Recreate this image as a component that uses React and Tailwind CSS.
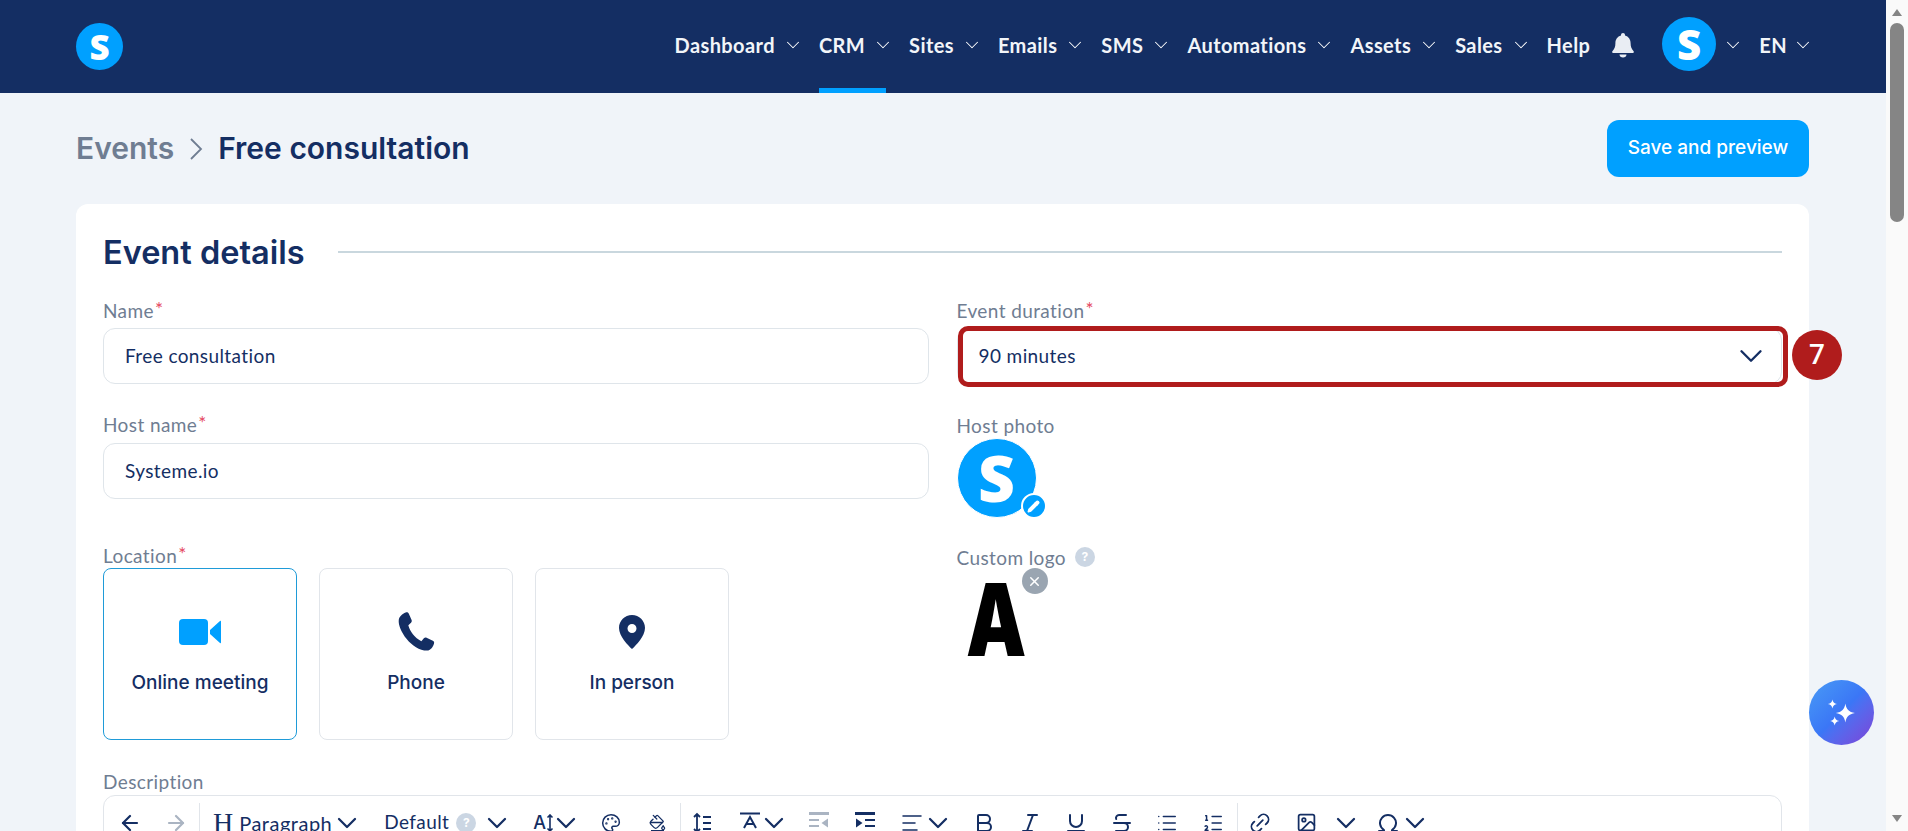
import {
  ArrowLeft,
  ArrowRight,
  Bold,
  ChevronDown,
  Image,
  Italic,
  Link2,
  List,
  ListOrdered,
  AlignLeft,
  Omega,
  Palette,
  PaintBucket,
  Pencil,
  Strikethrough,
  Underline,
  X,
} from "lucide-react";

const navItems = [
  { label: "Dashboard", caret: true },
  { label: "CRM", caret: true, active: true },
  { label: "Sites", caret: true },
  { label: "Emails", caret: true },
  { label: "SMS", caret: true },
  { label: "Automations", caret: true },
  { label: "Assets", caret: true },
  { label: "Sales", caret: true },
  { label: "Help" },
];

function Caret() {
  return <ChevronDown size={22} strokeWidth={1.1} className="text-white" />;
}

function Logo({ className, textClass }) {
  return (
    <div className={`flex shrink-0 items-center justify-center rounded-full bg-[#00a0ff] font-['Open_Sans',sans-serif] font-extrabold text-white ${className}`}>
      <span className={textClass}>S</span>
    </div>
  );
}

function NavBar() {
  return (
    <header className="flex h-[93px] items-center justify-between bg-[#142e63] pl-[76px] pr-[72px]">
      <Logo className="h-[47px] w-[47px]" textClass="text-[35px] leading-none" />
      <nav className="flex h-full items-center font-['Lato',sans-serif] text-[20px] font-bold tracking-[0.4px] text-[#f2f5f9]">
        {navItems.map((item) => (
          <div key={item.label} className={`relative flex h-full items-center gap-[7px] pb-[4px] ${item.caret ? "mr-[15px]" : ""}`}>
            <span>{item.label}</span>
            {item.caret && <Caret />}
            {item.active && <div className="absolute bottom-0 left-0 h-[5px] w-[67px] bg-[#00a0ff]" />}
          </div>
        ))}
        <svg width="24" height="26" viewBox="0 0 24 26" className="-mt-[4px] ml-[21px] mr-[27px]" fill="#e9edf3">
          <path d="M12 1c1.2 0 2 .9 2 2v.5c3.6 1 5.6 4 5.6 7.7 0 3.800 1 5.800 3 8 .6.7.2 1.800-.8 1.800H2.200c-1 0-1.400-1.100-.8-1.800 2-2.200 3-4.200 3-8 0-3.700 2-6.700 5.600-7.700V3c0-1.100.8-2 2-2z" />
          <path d="M8.500 22.500h7c0 1.800-1.500 3-3.500 3s-3.500-1.200-3.500-3z" />
        </svg>
        <Logo className="-mt-[5px] h-[54px] w-[54px]" textClass="text-[42px] leading-none" />
        <div className="-mt-[4px] ml-[6px] mr-[15px]"><Caret /></div>
        <div className="-mt-[4px] flex items-center gap-[5px]">
          <span>EN</span>
          <Caret />
        </div>
      </nav>
    </header>
  );
}

function Label({ children, required, hint }) {
  return (
    <div className="flex h-[22px] items-center font-['Lato',sans-serif] text-[19px] leading-none tracking-[0.4px] text-[#6f7d92]">
      {children}
      {required && <span className="ml-[1px] -mt-[4px] text-[#e5465e]">*</span>}
      {hint && <HelpDot className="ml-[9px]" />}
    </div>
  );
}

function HelpDot({ className }) {
  return (
    <span className={`flex h-[20px] w-[20px] items-center justify-center rounded-full bg-[#cbd6e3] font-['Inter',sans-serif] text-[12px] font-bold text-white ${className}`}>?</span>
  );
}

function TextInput({ value, children }) {
  return (
    <div className="flex h-[56px] items-center justify-between rounded-[12px] border border-[#dfe5ea] bg-white pl-[21px] pr-[11px] font-['Lato',sans-serif] text-[19px] tracking-[0.4px] text-[#142e63]">
      <span>{value}</span>
      {children}
    </div>
  );
}

function LocationCard({ label, active, children }) {
  return (
    <div className={`flex h-[172px] w-[194px] flex-col items-center rounded-[8px] border bg-white pt-[43px] ${active ? "border-[#1f9bd8]" : "border-[#e1e5ea]"}`}>
      <div className="flex h-[40px] items-center justify-center">{children}</div>
      <div className="mt-[19px] font-['Inter',sans-serif] text-[19px] font-medium leading-[24px] text-[#142e63]">{label}</div>
    </div>
  );
}

function Tool({ children, w = 46, muted }) {
  return (
    <div
      className={`flex shrink-0 items-center justify-center ${muted ? "text-[#aab4c2]" : "text-[#142e63]"}`}
      style={{ width: w }}
    >
      {children}
    </div>
  );
}

function Sep({ className = "" }) {
  return <div className={`h-[40px] w-px shrink-0 bg-[#e1e5ea] ${className}`} />;
}

function Chev({ className = "" }) {
  return <ChevronDown size={32} strokeWidth={1.7} className={`shrink-0 ${className}`} />;
}

function IndentIcon({ flip }) {
  return (
    <svg width="22" height="24" viewBox="0 0 22 24" fill="currentColor" className={flip ? "-scale-x-100" : ""}>
      <rect x="1" y="1" width="20" height="3" />
      <rect x="1" y="20" width="20" height="3" />
      <rect x="11" y="8" width="10" height="2" />
      <rect x="11" y="14" width="10" height="2" />
      <path d="M2 7.500 8.500 12 2 16.500z" />
    </svg>
  );
}

function Toolbar() {
  return (
    <div className="mt-[3px] rounded-t-[12px] border border-[#e1e5ea] bg-white">
      <div className="flex h-[50px] items-center pl-[3px] pt-[3px] font-['Lato',sans-serif] text-[#142e63]">
        <Tool><ArrowLeft size={24} strokeWidth={2.2} /></Tool>
        <Tool muted><ArrowRight size={24} strokeWidth={2.2} /></Tool>
        <Sep />
        <span className="ml-[13px] font-['Liberation_Serif',serif] text-[28px] leading-none">H</span>
        <span className="ml-[6px] text-[20px] tracking-[0.5px]">Paragraph</span>
        <Chev className="-ml-[1px]" />
        <span className="ml-[21px] w-[63px] shrink-0 text-[19px] tracking-[0.4px]">Default</span>
        <HelpDot className="ml-[9px] shrink-0" />
        <Chev className="ml-[5px]" />
        <div className="ml-[20px] flex shrink-0 items-center font-['Inter',sans-serif] text-[18px] font-medium">
          <span>A</span>
          <svg width="8" height="18" viewBox="0 0 8 18" fill="none" stroke="currentColor" strokeWidth="1.600">
            <path d="M4 1v16M1.500 3.500 4 1l2.500 2.500M1.500 14.500 4 17l2.500-2.500" />
          </svg>
        </div>
        <Chev className="-ml-[4px]" />
        <Tool w={58}><Palette size={20} strokeWidth={1.8} /></Tool>
        <Tool w={34}>
          <div className="flex flex-col items-center">
            <PaintBucket size={17} strokeWidth={1.8} />
            <div className="-mt-[1px] h-[2px] w-[13px] bg-[#142e63]" />
          </div>
        </Tool>
        <Sep className="ml-[6px]" />
        <Tool w={42}>
          <svg width="20" height="22" viewBox="0 0 20 22" fill="none" stroke="currentColor" strokeWidth="1.800">
            <path d="M5 2v18M2 5l3-3 3 3M2 17l3 3 3-3M11 5h8M11 11h8M11 17h8" />
          </svg>
        </Tool>
        <svg width="24" height="24" viewBox="0 0 24 24" fill="none" stroke="currentColor" strokeWidth="2" className="ml-[15px] shrink-0">
          <path d="M2 2.500h20M6 17 12 6l6 11M8.200 13h7.600M2 22h20" />
        </svg>
        <Chev className="-ml-[4px]" />
        <Tool w={58} muted><IndentIcon flip /></Tool>
        <Tool w={34}><IndentIcon /></Tool>
        <AlignLeft size={24} strokeWidth={1.5} className="ml-[18px] shrink-0" />
        <Chev className="-ml-[2px]" />
        <Tool w={60}><Bold size={24} strokeWidth={2} /></Tool>
        <Tool w={32}><Italic size={24} strokeWidth={2} /></Tool>
        <Tool w={60}><Underline size={24} strokeWidth={2} /></Tool>
        <Tool w={32}><Strikethrough size={24} strokeWidth={2} /></Tool>
        <Tool w={58}><List size={22} strokeWidth={1.6} /></Tool>
        <Tool w={34}><ListOrdered size={22} strokeWidth={1.6} /></Tool>
        <Sep className="ml-[7px]" />
        <Tool w={44}><Link2 size={24} strokeWidth={1.8} className="-rotate-45" /></Tool>
        <Tool w={48}><Image size={21} strokeWidth={2} /></Tool>
        <Tool w={32}><Chev /></Tool>
        <Omega size={24} strokeWidth={2} className="ml-[14px] shrink-0" />
        <Chev className="-ml-[1px]" />
      </div>
    </div>
  );
}

function Sparkles() {
  return (
    <svg width="36" height="36" viewBox="0 0 32 32" fill="#fff">
      <path d="M19 7.500c.8 5 3 7.500 8.500 8.500-5.500 1-7.700 3.500-8.500 8.500-.8-5-3-7.500-8.500-8.500 5.500-1 7.700-3.500 8.500-8.500z" />
      <path d="M7.500 4c.4 2.400 1.500 3.600 4 4-2.500.4-3.600 1.600-4 4-.4-2.400-1.500-3.600-4-4 2.500-.4 3.600-1.600 4-4z" />
      <path d="M9.500 19c.4 2.400 1.500 3.600 4 4-2.500.4-3.600 1.600-4 4-.4-2.400-1.500-3.600-4-4 2.500-.4 3.600-1.600 4-4z" />
    </svg>
  );
}

function Scrollbar() {
  return (
    <div className="flex h-full w-[22px] shrink-0 flex-col items-center bg-[#fafafa]">
      <div className="mt-[9px] h-0 w-0 border-x-[5px] border-b-[7px] border-x-transparent border-b-[#858585]" />
      <div className="mt-[7px] h-[199px] w-[14px] rounded-full bg-[#858585]" />
      <div className="mt-auto mb-[9px] h-0 w-0 border-x-[5px] border-t-[7px] border-x-transparent border-t-[#858585]" />
    </div>
  );
}

export default function App() {
  return (
    <div className="flex h-screen overflow-hidden bg-[#f0f4f9]">
      <div className="relative min-w-0 flex-1 overflow-hidden">
        <NavBar />
        <main className="pl-[76px] pr-[77px]">
          <div className="flex h-[111px] items-center justify-between">
            <div className="flex items-center font-['Inter',sans-serif] text-[30px] font-semibold">
              <span className="text-[#6f7d92]">Events</span>
              <svg width="14" height="24" viewBox="0 0 14 24" fill="none" stroke="#6f7d92" strokeWidth="1.800" className="mx-[15px]">
                <path d="M2 2l10 10L2 22" />
              </svg>
              <span className="text-[#142e63]">Free consultation</span>
            </div>
            <button className="h-[57px] w-[202px] rounded-[12px] bg-[#00a0ff] font-['Inter',sans-serif] text-[19px] font-medium text-white">
              Save and preview
            </button>
          </div>

          <section className="rounded-t-[12px] bg-white px-[27px] pt-[27px]">
            <div className="flex h-[42px] items-center">
              <h2 className="pt-[2px] font-['Inter',sans-serif] text-[32.5px] font-semibold leading-none text-[#142e63]">Event details</h2>
              <div className="ml-[33px] h-[2px] flex-1 bg-[#c9d7de]" />
            </div>

            <div className="mt-[26px] grid grid-cols-2 gap-x-[28px]">
              <div>
                <Label required>Name</Label>
                <div className="mt-[7px]"><TextInput value="Free consultation" /></div>
                <div className="mt-[29px]"><Label required>Host name</Label></div>
                <div className="mt-[8px]"><TextInput value="Systeme.io" /></div>
                <div className="mt-[45px]"><Label required>Location</Label></div>
                <div className="mt-[2px] flex gap-[22px]">
                  <LocationCard label="Online meeting" active>
                    <svg width="42" height="28" viewBox="0 0 42 28" fill="#00a0ff">
                      <rect x="0" y="1" width="29" height="26" rx="4" />
                      <path d="M31 12 41 3c.4-.4 1-.1 1 .5v21c0 .6-.6.9-1 .5l-10-9z" />
                    </svg>
                  </LocationCard>
                  <LocationCard label="Phone">
                    <svg width="46" height="46" viewBox="0 0 24 24" fill="#142e63">
                      <path d="M6.600 1.800c.6-.3 1.300-.1 1.600.5l1.500 3.500c.2.500.1 1-.3 1.400L8 8.500c.7 3.100 3.400 6.600 6.800 8.300l1.300-1.500c.4-.4.900-.5 1.400-.3l3.300 1.500c.6.300.8.900.6 1.500-.6 2-1.900 3.700-3.600 3.700C9.800 21.600 2.400 11 3 5.700c.2-1.700 1.900-3.300 3.600-3.900z" />
                    </svg>
                  </LocationCard>
                  <LocationCard label="In person">
                    <svg width="28" height="36" viewBox="0 0 28 36" fill="#142e63">
                      <path fillRule="evenodd" d="M14 1C6.800 1 1 6.800 1 14c0 8 9 17.500 13 21 4-3.500 13-13 13-21C27 6.800 21.200 1 14 1zm0 9a4.500 4.500 0 1 1 0 9 4.500 4.500 0 0 1 0-9z" />
                    </svg>
                  </LocationCard>
                </div>
              </div>

              <div>
                <Label required>Event duration</Label>
                <div className="relative mt-[7px]">
                  <TextInput value="90 minutes">
                    <ChevronDown size={38} strokeWidth={1.5} />
                  </TextInput>
                  <div className="absolute left-[1px] -right-[6px] -top-[2px] -bottom-[3px] rounded-[10px] border-[5px] border-[#b01c1c]" />
                  <div className="absolute -right-[60px] top-[2px] flex h-[50px] w-[50px] items-center justify-center rounded-full bg-[#b01c1c] font-['Roboto',sans-serif] text-[28px] font-medium text-white">7</div>
                </div>
                <div className="mt-[30px]"><Label>Host photo</Label></div>
                <div className="relative mt-[2px] h-[80px] w-[80px]">
                  <Logo className="h-[80px] w-[80px] border border-white" textClass="text-[64px] leading-none" />
                  <div className="absolute -bottom-[1px] -right-[10px] flex h-[26px] w-[26px] items-center justify-center rounded-full border-2 border-white bg-[#00a0ff]">
                    <Pencil size={13} fill="#fff" color="#fff" />
                  </div>
                </div>
                <div className="mt-[28px]"><Label hint>Custom logo</Label></div>
                <div className="relative h-[100px] w-[90px]">
                  <div className="origin-left scale-x-[0.76] pl-[12px] pt-[12px] font-['Inter',sans-serif] text-[100px] font-black leading-[80px] text-black">A</div>
                  <div className="absolute left-[65px] top-[0px] flex h-[26px] w-[26px] items-center justify-center rounded-full bg-[#9aa5b1]">
                    <X size={15} strokeWidth={2.4} color="#fff" />
                  </div>
                </div>
              </div>
            </div>

            <div className="mt-[30px]"><Label>Description</Label></div>
            <Toolbar />
          </section>
        </main>

        <div className="absolute right-[12px] top-[680px] flex h-[65px] w-[65px] items-center justify-center rounded-full bg-gradient-to-br from-[#4a9bf5] via-[#3b76f6] to-[#7a3fd6]">
          <Sparkles />
        </div>
      </div>
      <Scrollbar />
    </div>
  );
}
